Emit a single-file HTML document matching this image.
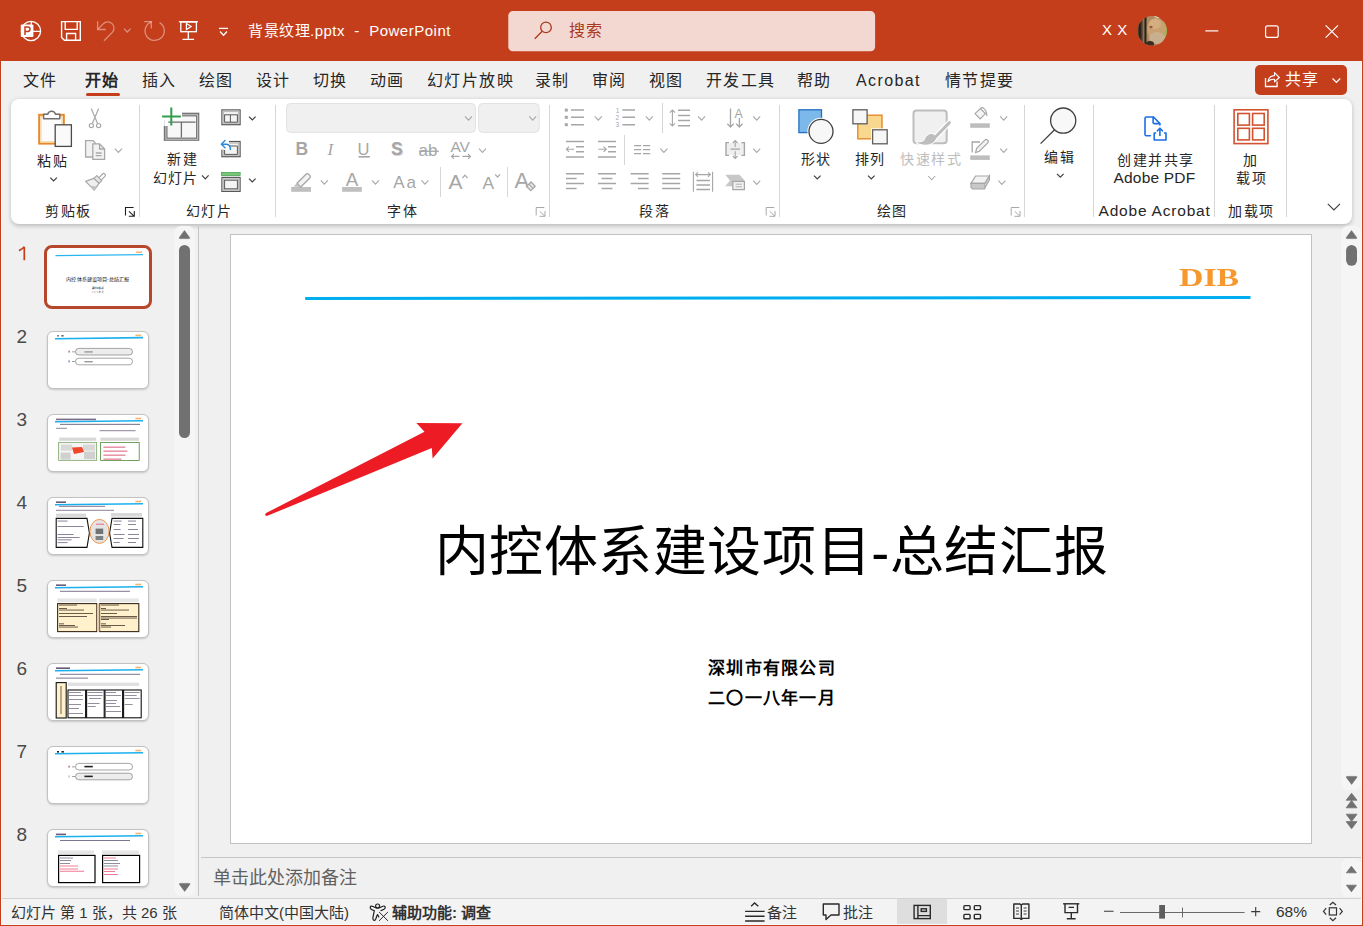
<!DOCTYPE html>
<html lang="zh-CN">
<head>
<meta charset="utf-8">
<style>
html,body{margin:0;padding:0;}
body{width:1363px;height:926px;overflow:hidden;position:relative;background:#F0F0F0;font-family:"Liberation Sans",sans-serif;color:#262626;}
.a{position:absolute;}
.t{position:absolute;white-space:nowrap;line-height:1;}
svg{position:absolute;overflow:visible;}
</style>
</head>
<body>
<!-- TITLE BAR -->
<div class="a" style="left:0;top:0;width:1363px;height:61px;background:#C43E1C;"></div>
<!-- window borders -->
<div class="a" style="left:0;top:61px;width:1px;height:865px;background:#C43E1C;"></div>
<div class="a" style="left:1362px;top:61px;width:1px;height:865px;background:#C43E1C;"></div>
<div class="a" style="left:0;top:925px;width:1363px;height:1px;background:#C43E1C;"></div>

<!-- TITLEBAR_ICONS -->
<svg style="left:0;top:0" width="1363" height="61" viewBox="0 0 1363 61">
 <!-- ppt logo -->
 <g fill="none" stroke="#fff" stroke-width="1.3">
  <circle cx="31" cy="31" r="9.6"/>
  <path d="M31.3 21.5V31.3H40.5"/>
 </g>
 <rect x="20.8" y="24.4" width="12.6" height="12.6" rx="1" fill="#fff"/>
 <path d="M25 35V27H27.8A2.2 2.2 0 0 1 27.8 31.4H25" fill="none" stroke="#C43E1C" stroke-width="1.5"/>
 <!-- save -->
 <g fill="none" stroke="#fff" stroke-width="1.4">
  <path d="M61.6 21.6H80.3V40.3H64.4L61.6 37.5Z"/>
  <path d="M65.2 21.6V29.4H77.2V21.6"/>
  <path d="M66.6 40.3V33.5H75.6V40.3"/>
 </g>
 <!-- undo -->
 <g fill="none" stroke="rgba(255,255,255,0.42)" stroke-width="1.3">
  <path d="M97.6 21.3V29.5H105.8"/>
  <path d="M98.2 28.9L103.3 23.8A6.2 6.2 0 0 1 112.3 32.4L104 40.8"/>
  <path d="M124 28.6L127.3 32L130.6 28.6"/>
  <path d="M159.6 22.6A9.6 9.6 0 1 1 151.5 21.8"/>
  <path d="M144.2 21.6H151.3V28.6"/>
 </g>
 <!-- present -->
 <g fill="none" stroke="#fff" stroke-width="1.3">
  <path d="M178.9 21.7H197.9"/>
  <rect x="180.8" y="22" width="15.6" height="9.7"/>
  <path d="M188.3 31.8V39.4M182.5 39.4H194.1"/>
 </g>
 <path d="M186.4 23.6L191.2 26.6L186.4 29.6Z" fill="none" stroke="#fff" stroke-width="1.2"/>
 <!-- customize -->
 <g fill="none" stroke="#fff" stroke-width="1.3">
  <path d="M219 28.4H228"/>
  <path d="M220 31.5L223.5 35.2L227 31.5"/>
 </g>
 <!-- search box -->
 <rect x="508.3" y="11.1" width="366.8" height="40.2" rx="4.5" fill="#F3D8D1"/>
 <g fill="none" stroke="#A8391E" stroke-width="1.3">
  <circle cx="546" cy="27.4" r="5.3"/>
  <path d="M542.2 31.2L534.8 38.8"/>
 </g>
 <!-- avatar -->
 <defs>
  <clipPath id="av"><circle cx="1152.2" cy="30.8" r="14.7"/></clipPath>
  <radialGradient id="avf" cx="0.55" cy="0.45" r="0.5"><stop offset="0" stop-color="#D8B080"/><stop offset="0.7" stop-color="#B88A58"/><stop offset="1" stop-color="#9A7048"/></radialGradient>
 </defs>
 <defs><filter id="avb" x="-20%" y="-20%" width="140%" height="140%"><feGaussianBlur stdDeviation="0.7"/></filter></defs>
 <g clip-path="url(#av)">
  <rect x="1137" y="15" width="31" height="32" fill="#B08A5E"/>
  <g filter="url(#avb)">
  <rect x="1163" y="15" width="6" height="32" fill="#A8B45A"/>
  <ellipse cx="1156" cy="29" rx="9" ry="11" fill="#C9A072"/>
  <ellipse cx="1155" cy="24" rx="6" ry="5" fill="#D4AE80"/>
  <ellipse cx="1157" cy="38" rx="8" ry="6" fill="#C8B08E"/>
  <rect x="1137" y="15" width="9.5" height="32" fill="#4A3C2C"/>
  <rect x="1139.2" y="15" width="1.4" height="32" fill="#221A12"/>
  <rect x="1142.6" y="15" width="1.6" height="32" fill="#8A7458"/>
  <rect x="1145" y="15" width="1.2" height="32" fill="#2A2016"/>
  <ellipse cx="1150" cy="44" rx="4" ry="3" fill="#3A2C20"/>
  <ellipse cx="1151" cy="27" rx="1.6" ry="1.2" fill="#9A5A48"/>
  <ellipse cx="1160" cy="16" rx="6" ry="2" fill="#E8E0D0"/>
  </g>
 </g>
 <!-- window controls -->
 <g fill="none" stroke="#fff" stroke-width="1.2">
  <path d="M1205.3 30.9H1218.3"/>
  <rect x="1265.6" y="25.8" width="12.6" height="11.6" rx="2"/>
  <path d="M1325.6 25.4L1338 37.6M1338 25.4L1325.6 37.6"/>
 </g>
</svg>
<div class="t" style="left:248px;top:22.5px;font-size:15px;letter-spacing:0.5px;color:#fff;">背景纹理.pptx&nbsp; -&nbsp; PowerPoint</div>
<div class="t" style="left:568.5px;top:22.5px;font-size:16px;letter-spacing:1.6px;color:#A8391E;">搜索</div>
<div class="t" style="left:1102px;top:22px;font-size:15px;letter-spacing:0.6px;color:#fff;">X X</div>

<!-- TABS -->
<div class="t" style="left:23px;top:73px;font-size:16px;letter-spacing:1.4px;">文件</div>
<div class="t" style="left:85px;top:73px;font-size:16px;letter-spacing:1.4px;font-weight:bold;">开始</div>
<div class="a" style="left:85.5px;top:93px;width:34.5px;height:3px;border-radius:1.5px;background:#C43E1C;"></div>
<div class="t" style="left:142px;top:73px;font-size:16px;letter-spacing:1.4px;">插入</div>
<div class="t" style="left:199px;top:73px;font-size:16px;letter-spacing:1.4px;">绘图</div>
<div class="t" style="left:256px;top:73px;font-size:16px;letter-spacing:1.4px;">设计</div>
<div class="t" style="left:313px;top:73px;font-size:16px;letter-spacing:1.4px;">切换</div>
<div class="t" style="left:370px;top:73px;font-size:16px;letter-spacing:1.4px;">动画</div>
<div class="t" style="left:427px;top:73px;font-size:16px;letter-spacing:1.4px;">幻灯片放映</div>
<div class="t" style="left:535px;top:73px;font-size:16px;letter-spacing:1.4px;">录制</div>
<div class="t" style="left:592px;top:73px;font-size:16px;letter-spacing:1.4px;">审阅</div>
<div class="t" style="left:649px;top:73px;font-size:16px;letter-spacing:1.4px;">视图</div>
<div class="t" style="left:706px;top:73px;font-size:16px;letter-spacing:1.4px;">开发工具</div>
<div class="t" style="left:797px;top:73px;font-size:16px;letter-spacing:1.4px;">帮助</div>
<div class="t" style="left:856px;top:73px;font-size:16px;letter-spacing:1.4px;">Acrobat</div>
<div class="t" style="left:945px;top:73px;font-size:16px;letter-spacing:1.4px;">情节提要</div>
<!-- share -->
<div class="a" style="left:1255px;top:65px;width:92px;height:30px;border-radius:5px;background:#C43E1C;"></div>
<svg style="left:0;top:0" width="1363" height="100">
 <g fill="none" stroke="#fff" stroke-width="1.3">
  <path d="M1265.5 78.1V86.5H1277.1V81.4"/>
  <path d="M1268 81.6Q1268.8 75.8 1274.5 75.6V72.6L1279.3 77.5L1274.5 81.8V79.2Q1270.4 79 1268 81.6Z" stroke-width="1.1" stroke-linejoin="round"/>
  <path d="M1332.6 78.5L1336.4 82.4L1340.2 78.5"/>
 </g>
</svg>
<div class="t" style="left:1285px;top:72px;font-size:16px;letter-spacing:1.4px;color:#fff;">共享</div>

<!-- RIBBON -->
<div class="a" style="left:11px;top:99px;width:1341px;height:125px;border-radius:8px;background:#fff;box-shadow:0 1.5px 4px rgba(0,0,0,0.22);"></div>
<svg style="left:0;top:0" width="1363" height="240">
 <!-- separators -->
 <g stroke="#D6D6D6" stroke-width="1">
  <path d="M139.5 105V217M275.5 105V217M549.5 105V217M779.5 105V217M1024.5 105V217M1093.5 105V217M1214.5 105V217M1286.5 105V217"/>
  <path d="M662.5 103V133M624.5 135V165M440.5 167V197M507.5 167V197"/>
 </g>
 <!-- paste -->
 <rect x="39.2" y="114.8" width="24.6" height="28.8" fill="#FCFCFC" stroke="#E8882A" stroke-width="2"/>
 <rect x="41" y="116.6" width="21" height="25.2" fill="none" stroke="#F8D89A" stroke-width="1.2"/>
 <path d="M43.6 118.8V114.2H47.8A3.9 3.9 0 0 1 55.4 114.2H59.8V118.8Z" fill="#fff" stroke="#707070" stroke-width="1.5" stroke-linejoin="round"/>
 <rect x="55.2" y="124.8" width="16.2" height="21.6" fill="#FAFAFA" stroke="#4A4A4A" stroke-width="1.3"/>
 <!-- cut -->
 <g fill="none" stroke="#A8A8A8" stroke-width="1.2">
  <path d="M91.2 108.4L97.6 123.6M98.7 108.4L92.3 123.6"/>
  <circle cx="91.4" cy="125.6" r="2.1"/><circle cx="98.6" cy="125.6" r="2.1"/>
 </g>
 <!-- copy -->
 <g stroke="#A8A8A8" stroke-width="1.3" fill="#F2F2F2">
  <path d="M85.6 157V140.6H93L95 142.6V157Z"/>
  <path d="M92.8 159.3V143.9H99.6L104.6 149V159.3Z"/>
  <path d="M99.6 143.9V149H104.6" fill="none"/>
  <path d="M95.8 153H101.6M95.8 155.6H101.6" fill="none"/>
 </g>
 <!-- format painter -->
 <path d="M98.2 178.4L102.6 174A1.5 1.5 0 0 1 104.7 174L104.9 174.2A1.5 1.5 0 0 1 104.9 176.3L100.5 180.7Z" fill="#fff" stroke="#A8A8A8" stroke-width="1.2"/>
 <path d="M93.8 178.4L96.8 175.6L101.8 180.6L99 183.4Z" fill="#E4E4E4" stroke="#A8A8A8" stroke-width="1.2" stroke-linejoin="round"/>
 <path d="M85.6 181.4L93.8 178.4L99 183.4L94.2 190.2Z" fill="#F0F0F0" stroke="#A8A8A8" stroke-width="1.2" stroke-linejoin="round"/>
 <path d="M89.4 185.4L96.6 186.4L94.2 190.2Z" fill="#C4C4C4"/>
 <!-- chevrons (dark) -->
 <g fill="none" stroke="#404040" stroke-width="1.2">
  <path d="M50.3 177.6L53.6 181L56.9 177.6"/>
  <path d="M202 175.4L205.3 178.8L208.6 175.4"/>
  <path d="M249 116.6L252.3 120L255.6 116.6"/>
  <path d="M249 178.6L252.3 182L255.6 178.6"/>
  <path d="M814 175.6L817.3 179L820.6 175.6"/>
  <path d="M868 175.6L871.3 179L874.6 175.6"/>
  <path d="M1057 173.8L1060.3 177.2L1063.6 173.8"/>
  <path d="M1327.8 203.8L1333.9 209.9L1340 203.8"/>
 </g>
 <!-- chevrons (disabled) -->
 <g fill="none" stroke="#A8A8A8" stroke-width="1.1">
  <path d="M114.8 148.6L118.4 152.4L122 148.6"/>
  <path d="M479 148.6L482.5 152.4L486 148.6"/>
  <path d="M320.8 180.4L324.3 184.2L327.8 180.4"/>
  <path d="M372 180.4L375.5 184.2L379 180.4"/>
  <path d="M421.4 180.4L424.9 184.2L428.4 180.4"/>
  <path d="M594.8 116.4L598.3 120.2L601.8 116.4"/>
  <path d="M645.8 116.4L649.3 120.2L652.8 116.4"/>
  <path d="M698 116.4L701.5 120.2L705 116.4"/>
  <path d="M753.2 116.4L756.7 120.2L760.2 116.4"/>
  <path d="M660.4 148.6L663.9 152.4L667.4 148.6"/>
  <path d="M753.2 148.6L756.7 152.4L760.2 148.6"/>
  <path d="M753.2 180.6L756.7 184.4L760.2 180.6"/>
  <path d="M928.2 176L931.7 179.8L935.2 176"/>
  <path d="M1000.2 116.4L1003.7 120.2L1007.2 116.4"/>
  <path d="M1000.2 148.6L1003.7 152.4L1007.2 148.6"/>
  <path d="M998.4 180.6L1001.9 184.4L1005.4 180.6"/>
 </g>
 <!-- dialog launchers -->
 <g fill="none" stroke="#1E1E1E" stroke-width="1.1"><path d="M125.5 215.5V207.5H133.6M129.0 211.3L134.3 216.3M134.3 211V216.3H128.8"/></g>
 <g fill="none" stroke="#A8A8A8" stroke-width="1"><path d="M536.2 215.5V207.5H544.3M539.7 211.3L545.0 216.3M545.0 211V216.3H539.5"/><path d="M766.2 215.5V207.5H774.3M769.7 211.3L775.0 216.3M775.0 211V216.3H769.5"/><path d="M1011.2 215.5V207.5H1019.3M1014.7 211.3L1020.0 216.3M1020.0 211V216.3H1014.5"/></g>
 <!-- new slide -->
 <rect x="165.9" y="114.8" width="31.8" height="24.4" fill="#F7F7F7" stroke="#6E6E6E" stroke-width="3.2"/>
 <rect x="165.9" y="114.8" width="31.8" height="24.4" fill="none" stroke="#CFCFCF" stroke-width="1"/>
 <path d="M168 122.2H195.5M181.4 122.2V137.5" stroke="#6E6E6E" stroke-width="1.3"/>
 <rect x="160" y="105" width="22" height="15" fill="#fff"/>
 <rect x="164.3" y="120" width="4" height="6" fill="#fff"/>
 <path d="M171.3 107.4V125.6M162.1 116.5H180.9" stroke="#2F9E4E" stroke-width="2"/>
 <path d="M182 113.2H199.3" stroke="#6E6E6E" stroke-width="1"/>
 <path d="M164.3 126V140.8" stroke="#6E6E6E" stroke-width="1"/>
 <!-- layout -->
 <rect x="221.9" y="109.9" width="18.2" height="14.8" fill="#F4F4F4" stroke="#585858" stroke-width="1.2"/>
 <rect x="223.4" y="111.4" width="15.2" height="11.8" fill="none" stroke="#BDBDBD" stroke-width="1.4"/>
 <path d="M224.3 114.8H237.7M224.6 122.2H237.4M224.6 114.8V122.2M237.4 114.8V122.2M230.4 114.8V122.2" fill="none" stroke="#585858" stroke-width="1"/>
 <!-- reset -->
 <rect x="221.9" y="141.5" width="18.2" height="15.2" fill="#F4F4F4" stroke="#585858" stroke-width="1.2"/>
 <rect x="223.4" y="143" width="15.2" height="12.2" fill="none" stroke="#BDBDBD" stroke-width="1.4"/>
 <path d="M228 146H237.4V154.4H224.6V150" fill="none" stroke="#585858" stroke-width="1"/>
 <rect x="219.6" y="139" width="9.4" height="10.6" fill="#fff"/>
 <g fill="none" stroke="#2B8AD8" stroke-width="1.4" stroke-linecap="round" stroke-linejoin="round">
  <path d="M221.6 144.2H226.6Q230.4 144.6 230.4 149.6"/>
  <path d="M225 140.6L221.4 144.2L225 147.8"/>
 </g>
 <!-- section -->
 <rect x="221.6" y="172.4" width="18.6" height="3.2" fill="#7CC576" stroke="#3C9E4E" stroke-width="0.7"/>
 <rect x="221.9" y="177.4" width="18.2" height="14" fill="#F4F4F4" stroke="#585858" stroke-width="1.2"/>
 <rect x="223.4" y="178.9" width="15.2" height="11" fill="none" stroke="#BDBDBD" stroke-width="1.4"/>
 <rect x="224.6" y="180.2" width="12.8" height="8.6" fill="#F4F4F4" stroke="#585858" stroke-width="1"/>
 <!-- font boxes -->
 <rect x="286.5" y="103.5" width="189" height="28.8" rx="4" fill="#F0F0F0" stroke="#E2E2E2" stroke-width="1"/>
 <rect x="478.6" y="103.5" width="60.6" height="28.8" rx="4" fill="#F0F0F0" stroke="#E2E2E2" stroke-width="1"/>
</svg>
<svg style="left:0;top:0" width="1363" height="240" font-family="Liberation Sans">
 <g fill="none" stroke="#A8A8A8" stroke-width="1.1"><path d="M465 116.4L468.5 120.2L472 116.4"/><path d="M529.2 116.4L532.7 120.2L536.2 116.4"/></g>
 <!-- font row1 -->
 <g fill="#A6A6A6">
  <text x="295.6" y="155.1" font-size="17.5" font-weight="bold">B</text>
  <text x="327.4" y="155" font-size="17" font-style="italic" font-family="Liberation Serif">I</text>
  <text x="357.4" y="154.6" font-size="16.5">U</text>
  <rect x="358.5" y="156" width="11.4" height="1.6"/>
  <text x="392.1" y="156.3" font-size="17.5" font-weight="bold" fill="#D8D8D8">S</text>
  <text x="390.9" y="155.2" font-size="17.5" font-weight="bold">S</text>
  <text x="418.6" y="156.2" font-size="17">ab</text>
  <rect x="419" y="150.6" width="19.8" height="1.3"/>
  <text x="450.4" y="151.6" font-size="15.5">AV</text>
 </g>
 <g fill="none" stroke="#A6A6A6" stroke-width="1.1">
  <path d="M451.5 156.4H459.5M454 154L451.5 156.4L454 158.8M462.5 156.4H470.5M468 154L470.5 156.4L468 158.8"/>
 </g>
 <!-- font row2 -->
 <rect x="291.2" y="187" width="19.8" height="4.8" fill="#BFBFBF"/>
 <path d="M297 183.2L306 174.2A1.8 1.8 0 0 1 308.6 174.2L309.8 175.4A1.8 1.8 0 0 1 309.8 178L300.8 187Z" fill="#F2F2F2" stroke="#A6A6A6" stroke-width="1.3"/>
 <path d="M297 183.2L300.8 187L293.4 186.6Z" fill="#BFBFBF"/>
 <rect x="342.1" y="187" width="19.7" height="4.8" fill="#BFBFBF"/>
 <g fill="#A6A6A6">
  <text x="345.8" y="185.7" font-size="18.8">A</text>
  <text x="393.2" y="188.4" font-size="17">A</text>
  <text x="406.4" y="188.4" font-size="17">a</text>
  <text x="448.6" y="188.5" font-size="21">A</text>
  <text x="482.4" y="188.5" font-size="17.4">A</text>
  <text x="514.6" y="188" font-size="22">A</text>
 </g>
 <g fill="none" stroke="#A6A6A6" stroke-width="1.2">
  <path d="M462.4 178.2L465 175.2L467.6 178.2"/>
  <path d="M495.2 174.4L497.6 177.2L500 174.4"/>
 </g>
 <path d="M526.6 186.4L531 182L535.2 186.2L530.8 190.6Z" fill="#E8E8E8" stroke="#A6A6A6" stroke-width="1.3"/>
 <path d="M528.8 184.2L533 188.4" stroke="#A6A6A6" stroke-width="1.2"/>
 <!-- paragraph -->
 <g fill="#A6A6A6">
  <rect x="564.8" y="108.6" width="3" height="3"/><rect x="564.8" y="115.8" width="3" height="3"/><rect x="564.8" y="123.2" width="3" height="3"/>
  <text x="615.8" y="112.5" font-size="6.5">1</text><text x="615.6" y="119.8" font-size="6.5">2</text><text x="615.6" y="127.2" font-size="6.5">3</text>
  <text x="734.6" y="117.6" font-size="12.5">A</text>
 </g>
 <g fill="none" stroke="#A6A6A6" stroke-width="1.5">
  <path d="M571 110H584M571 117.3H584M571 124.7H584"/>
  <path d="M622.4 110H635M622.4 117.3H635M622.4 124.7H635"/>
  <path d="M678 110.2H690M678 115.4H690M678 120.6H690M678 125.8H690"/>
  <path d="M566 141.5H584M576 146.8H584M576 151.8H584M566 157H584"/>
  <path d="M598 141.5H616M608 146.8H616M608 151.8H616M598 157H616"/>
  <path d="M566 173.8H584M566 178.6H576.6M566 183.4H584M566 188.4H576.6"/>
  <path d="M598 173.8H616M601.6 178.6H612.4M598 183.4H616M601.6 188.4H612.4"/>
  <path d="M630.6 173.8H648.6M638 178.6H648.6M630.6 183.4H648.6M638 188.4H648.6"/>
  <path d="M662.2 173.8H680.2M662.2 178.6H680.2M662.2 183.4H680.2M662.2 188.4H680.2"/>
  <path d="M696.4 180.4H710M696.4 185H710M696.4 189.6H710"/>
 </g>
 <g fill="none" stroke="#A6A6A6" stroke-width="1.1">
  <path d="M634 145.6H641.2M634 149.6H641.2M634 153.6H641.2M643 145.6H650.2M643 149.6H650.2M643 153.6H650.2"/>
  <path d="M672.4 110V126M669.8 112.6L672.4 110L675 112.6M669.8 123.4L672.4 126L675 123.4"/>
  <path d="M566.4 149.2H574.2M569 146.6L566.4 149.2L569 151.8"/>
  <path d="M598.4 149.2H606.2M603.6 146.6L606.2 149.2L603.6 151.8"/>
  <path d="M693.4 171.8V191.8M712.6 171.8V191.8M695.6 174.6H710.4M698 172.4L695.6 174.6L698 176.8M708 172.4L710.4 174.6L708 176.8"/>
 </g>
 <g fill="none" stroke="#A6A6A6" stroke-width="1.3">
  <path d="M730.5 108.4V127M727.3 123.8L730.5 127L733.7 123.8"/>
  <path d="M739.4 118V127M736.2 123.8L739.4 127L742.6 123.8"/>
 </g>
 <rect x="726" y="143" width="18" height="12" fill="#EFEFEF"/>
 <g fill="none" stroke="#A6A6A6" stroke-width="1.4">
  <path d="M729 142.6H726V155.4H729M741.4 142.6H744.4V155.4H741.4"/>
 </g>
 <g fill="none" stroke="#A6A6A6" stroke-width="1.1">
  <path d="M730.6 149.1H740M735.2 140.6V147M732.8 143L735.2 140.6L737.6 143M735.2 151.2V158.4M732.8 156L735.2 158.4L737.6 156"/>
 </g>
 <path d="M725.2 174.8H739.6L744.2 180V182H732.6V186.2H725.2L730 180.6Z" fill="#C8C8C8"/>
 <rect x="732.8" y="181.4" width="11.6" height="8.2" fill="#F2F2F2" stroke="#A6A6A6" stroke-width="1.3"/>
 <path d="M735.6 184.2H742M735.6 186.8H742" stroke="#A6A6A6" stroke-width="0.9"/>
 <!-- drawing -->
 <rect x="798.9" y="109.8" width="22.6" height="22.8" fill="#7DB8EA" stroke="#2270C4" stroke-width="1.3"/>
 <circle cx="821" cy="131.4" r="13.6" fill="#fff"/>
 <circle cx="821" cy="131.4" r="12" fill="#F7F7F7" stroke="#404040" stroke-width="1.3"/>
 <rect x="857.8" y="115.2" width="24.2" height="23.6" fill="#F8D88E" stroke="#E8882A" stroke-width="1.4"/>
 <rect x="852.9" y="109.8" width="14.2" height="14" fill="#F6F6F6" stroke="#5E5E5E" stroke-width="1.3"/>
 <rect x="871" y="128.4" width="18" height="17.2" fill="#fff"/>
 <rect x="872.6" y="129.8" width="14.6" height="14" fill="#F6F6F6" stroke="#5E5E5E" stroke-width="1.3"/>
 <rect x="913.5" y="110.5" width="33.2" height="32.8" rx="3" fill="#F0F0F0" stroke="#BDBDBD" stroke-width="2"/>
 <path d="M949.6 122.4L934 138.6" stroke="#fff" stroke-width="5.4" stroke-linecap="round"/>
 <path d="M916 142.6Q924 146.6 932 143.2Q936.6 140.6 935.6 136.6Q933.4 132.8 929.4 134.2Q925.6 135.8 924.8 139.6Q924 142.4 916 142.6Z" fill="#BDBDBD" stroke="#fff" stroke-width="1.6"/>
 <path d="M916 142.6Q924 146.6 932 143.2Q936.6 140.6 935.6 136.6Q933.4 132.8 929.4 134.2Q925.6 135.8 924.8 139.6Q924 142.4 916 142.6Z" fill="#BDBDBD"/>
 <path d="M949.4 122.6L934.2 138.2" stroke="#BDBDBD" stroke-width="3" stroke-linecap="round"/>
 <!-- fill -->
 <rect x="970.2" y="123.3" width="19.6" height="4.5" fill="#BDBDBD"/>
 <path d="M975 113.6L980.4 108.6L985.4 113.6L980.2 119Z" fill="#F4F4F4" stroke="#A6A6A6" stroke-width="1.2"/>
 <path d="M980.4 108.6Q982 106.8 984 108.6Q986.8 111 986.8 116" fill="none" stroke="#A6A6A6" stroke-width="1.2"/>
 <!-- outline -->
 <rect x="970.2" y="155.4" width="19.6" height="4.5" fill="#BDBDBD"/>
 <path d="M980 142H972.2V152.4" fill="none" stroke="#A6A6A6" stroke-width="1.3"/>
 <path d="M975.6 152.6L976.6 148.4L985.2 139.8A1.4 1.4 0 0 1 987.2 139.8L988 140.6A1.4 1.4 0 0 1 988 142.6L979.4 151.2Z" fill="#F2F2F2" stroke="#A6A6A6" stroke-width="1.2"/>
 <!-- effects -->
 <path d="M971 183.4L975.6 176H989.4L985 183.4Z" fill="#F2F2F2" stroke="#A6A6A6" stroke-width="1.2"/>
 <path d="M971 183.4V187.2L972.6 189H984.6L985 187V183.4Z" fill="#C8C8C8" stroke="#A6A6A6" stroke-width="1.2"/>
 <path d="M985 183.4L989.4 176V180L985 187.4" fill="#DADADA" stroke="#A6A6A6" stroke-width="1.2"/>
 <!-- editing -->
 <circle cx="1063.2" cy="120.6" r="12.6" fill="#F8F8F8" stroke="#404040" stroke-width="1.3"/>
 <path d="M1054.6 129.8L1040.6 143.6" stroke="#404040" stroke-width="1.3"/>
 <!-- acrobat -->
 <g fill="none" stroke="#1A6FE6" stroke-width="1.6" stroke-linecap="round" stroke-linejoin="round">
  <path d="M1150.4 135.7H1146.4Q1145 135.7 1145 134.3V118.4Q1145 117 1146.4 117H1153.5L1159.9 123.6V125"/>
  <path d="M1153.1 117.4V122.6Q1153.1 123.6 1154.1 123.6H1159.6"/>
  <path d="M1155.6 133H1154.2V140H1166V133H1164.5"/>
  <path d="M1159.9 135.5V128.6M1157.4 130.8L1159.9 128.2L1162.4 130.8"/>
 </g>
 <!-- add-ins -->
 <g fill="none" stroke="#D35230" stroke-width="1.6">
  <rect x="1234.1" y="109.8" width="33.8" height="33.8"/>
  <rect x="1237.8" y="113.5" width="11.6" height="11.6"/><rect x="1252.6" y="113.5" width="11.6" height="11.6"/>
  <rect x="1237.8" y="128.3" width="11.6" height="11.6"/><rect x="1252.6" y="128.3" width="11.6" height="11.6"/>
 </g>
</svg>
<div class="t" style="left:387px;top:204px;font-size:14px;letter-spacing:1.6px;">字体</div>
<div class="t" style="left:639px;top:204px;font-size:14px;letter-spacing:1.6px;">段落</div>
<div class="t" style="left:876.5px;top:204px;font-size:14px;letter-spacing:1.6px;">绘图</div>
<div class="t" style="left:800.5px;top:152px;font-size:14px;letter-spacing:1.6px;">形状</div>
<div class="t" style="left:854.5px;top:152px;font-size:14px;letter-spacing:1.6px;">排列</div>
<div class="t" style="left:900px;top:152px;font-size:14px;letter-spacing:1.6px;color:#BDBDBD;">快速样式</div>
<div class="t" style="left:1044px;top:150px;font-size:14px;letter-spacing:1.6px;">编辑</div>
<div class="t" style="left:1117px;top:152.5px;font-size:14px;letter-spacing:1.6px;">创建并共享</div>
<div class="t" style="left:1113.5px;top:170px;font-size:15.5px;letter-spacing:0.2px;">Adobe PDF</div>
<div class="t" style="left:1098.5px;top:203px;font-size:15.5px;letter-spacing:0.8px;">Adobe Acrobat</div>
<div class="t" style="left:1243px;top:152.5px;font-size:14px;">加</div>
<div class="t" style="left:1236px;top:171px;font-size:14px;letter-spacing:1.6px;">载项</div>
<div class="t" style="left:1228px;top:203.5px;font-size:14px;letter-spacing:1.6px;">加载项</div>
<div class="t" style="left:37px;top:154px;font-size:14px;letter-spacing:1.6px;">粘贴</div>
<div class="t" style="left:45px;top:204px;font-size:14px;letter-spacing:1.6px;">剪贴板</div>
<div class="t" style="left:167px;top:152px;font-size:14px;letter-spacing:1.6px;">新建</div>
<div class="t" style="left:152.5px;top:171px;font-size:14px;letter-spacing:1.2px;">幻灯片</div>
<div class="t" style="left:185.5px;top:204px;font-size:14px;letter-spacing:1.6px;">幻灯片</div>

<!-- LEFT PANE -->
<div class="a" style="left:174px;top:226px;width:21px;height:670px;border-radius:7px;background:#F5F5F5;"></div>
<div class="a" style="left:198px;top:226px;width:1px;height:670px;background:#C4C4C4;"></div>
<div class="a" style="left:179px;top:244.9px;width:10.9px;height:193.4px;border-radius:5.5px;background:#717171;"></div>
<svg style="left:0;top:0" width="1363" height="926">
 <path d="M184.45 230.6L189.6 237.6Q190 238.6 189 238.6H179.9Q178.9 238.6 179.3 237.6Z" fill="#717171" stroke="#717171" stroke-width="0.6" stroke-linejoin="round"/>
 <path d="M184.65 891.4L189.8 884.4Q190.2 883.4 189.2 883.4H180.1Q179.1 883.4 179.5 884.4Z" fill="#717171" stroke="#717171" stroke-width="0.6" stroke-linejoin="round"/>
</svg>
<svg style="left:0;top:0" width="40" height="270"><path d="M24.3 246.8V260.2M19 250.6Q22.6 249 24.3 246.8" fill="none" stroke="#C43E1C" stroke-width="1.7"/></svg>
<div class="t" style="left:16.5px;top:327px;font-size:19px;color:#4A4A4A;">2</div>
<div class="t" style="left:16.5px;top:410px;font-size:19px;color:#4A4A4A;">3</div>
<div class="t" style="left:16.5px;top:493px;font-size:19px;color:#4A4A4A;">4</div>
<div class="t" style="left:16.5px;top:576px;font-size:19px;color:#4A4A4A;">5</div>
<div class="t" style="left:16.5px;top:659px;font-size:19px;color:#4A4A4A;">6</div>
<div class="t" style="left:16.5px;top:742px;font-size:19px;color:#4A4A4A;">7</div>
<div class="t" style="left:16.5px;top:825px;font-size:19px;color:#4A4A4A;">8</div>
<!-- thumbnails -->
<div class="a" style="left:44px;top:245px;width:102px;height:58px;border:3px solid #B7472A;border-radius:8px;background:#fff;"></div>
<div class="a" style="left:47.3px;top:331.2px;width:99.3px;height:55.4px;border:1px solid #C2C2C2;border-radius:6px;background:#fff;box-shadow:0 1px 2px rgba(0,0,0,0.18);"></div>
<div class="a" style="left:47.3px;top:414.3px;width:99.3px;height:55.4px;border:1px solid #C2C2C2;border-radius:6px;background:#fff;box-shadow:0 1px 2px rgba(0,0,0,0.18);"></div>
<div class="a" style="left:47.3px;top:497.4px;width:99.3px;height:55.4px;border:1px solid #C2C2C2;border-radius:6px;background:#fff;box-shadow:0 1px 2px rgba(0,0,0,0.18);"></div>
<div class="a" style="left:47.3px;top:580.4px;width:99.3px;height:55.4px;border:1px solid #C2C2C2;border-radius:6px;background:#fff;box-shadow:0 1px 2px rgba(0,0,0,0.18);"></div>
<div class="a" style="left:47.3px;top:663.4px;width:99.3px;height:55.4px;border:1px solid #C2C2C2;border-radius:6px;background:#fff;box-shadow:0 1px 2px rgba(0,0,0,0.18);"></div>
<div class="a" style="left:47.3px;top:746.4px;width:99.3px;height:55.4px;border:1px solid #C2C2C2;border-radius:6px;background:#fff;box-shadow:0 1px 2px rgba(0,0,0,0.18);"></div>
<div class="a" style="left:47.3px;top:829.4px;width:99.3px;height:55.4px;border:1px solid #C2C2C2;border-radius:6px;background:#fff;box-shadow:0 1px 2px rgba(0,0,0,0.18);"></div>
<svg style="left:0;top:0" width="1363" height="926">
 <!-- thumb1 -->
 <path d="M55.5 255.6L143 254.6" stroke="#29B6F0" stroke-width="1.2"/>
 <rect x="136" y="251.5" width="6" height="1.4" fill="#F8B26A"/>
 <text x="66.4" y="281.2" font-size="5.1" fill="#222" textLength="62.5" lengthAdjust="spacingAndGlyphs">内控体系建设项目-总结汇报</text>
 <text x="91.6" y="289.4" font-size="1.8" fill="#333" font-weight="bold" textLength="12.6" lengthAdjust="spacingAndGlyphs">深圳市有限公司</text>
 <text x="92.4" y="292.6" font-size="1.8" fill="#444" font-weight="bold" textLength="11" lengthAdjust="spacingAndGlyphs">二〇一八年一月</text>
 <!-- common headers for thumbs 2-8 -->
 <g id="hdrs">
 <path d="M55 338.7L143 337.6" stroke="#1AB0EE" stroke-width="1.6"/><rect x="135.4" y="334.6" width="5.8" height="1.6" fill="#F8B26A"/>
 <path d="M55 421.8L143 420.7" stroke="#1AB0EE" stroke-width="1.6"/><rect x="135.4" y="417.7" width="5.8" height="1.6" fill="#F8B26A"/>
 <path d="M55 504.8L143 503.7" stroke="#1AB0EE" stroke-width="1.6"/><rect x="135.4" y="500.7" width="5.8" height="1.6" fill="#F8B26A"/>
 <path d="M55 587.8L143 586.7" stroke="#1AB0EE" stroke-width="1.6"/><rect x="135.4" y="583.7" width="5.8" height="1.6" fill="#F8B26A"/>
 <path d="M55 670.8L143 669.7" stroke="#1AB0EE" stroke-width="1.6"/><rect x="135.4" y="666.7" width="5.8" height="1.6" fill="#F8B26A"/>
 <path d="M55 753.8L143 752.7" stroke="#1AB0EE" stroke-width="1.6"/><rect x="135.4" y="749.7" width="5.8" height="1.6" fill="#F8B26A"/>
 <path d="M55 836.8L143 835.7" stroke="#1AB0EE" stroke-width="1.6"/><rect x="135.4" y="832.7" width="5.8" height="1.6" fill="#F8B26A"/>
 </g>
 <!-- thumb2 -->
 <rect x="57" y="335" width="2" height="1.6" fill="#888"/><rect x="61.5" y="335" width="2" height="1.6" fill="#555"/>
 <rect x="75.5" y="348.4" width="57" height="6.6" rx="3.3" fill="#EDEDED" stroke="#6A6A6A" stroke-width="0.6"/>
 <rect x="75.5" y="358.2" width="57" height="6.6" rx="3.3" fill="#fff" stroke="#6A6A6A" stroke-width="0.6"/>
 <rect x="68.6" y="350.6" width="1" height="2" fill="#A33"/><rect x="72" y="351.6" width="3" height="0.6" fill="#666"/>
 <rect x="68.6" y="360.4" width="1" height="2" fill="#36A"/><rect x="72" y="361.4" width="3" height="0.6" fill="#666"/>
 <rect x="84.4" y="351.2" width="8.4" height="1.4" fill="#999"/><rect x="84.4" y="361" width="8.4" height="1.4" fill="#999"/>
 <!-- thumb3 -->
 <rect x="56" y="418.6" width="40" height="1.6" fill="#7A6A8A"/>
 <rect x="60" y="423.8" width="80" height="1.2" fill="#8A8298"/>
 <rect x="56" y="427.8" width="11" height="1" fill="#9088A0"/>
 <rect x="99.6" y="430.2" width="36" height="1" fill="#8A8298"/>
 <rect x="59.2" y="437.6" width="37" height="3.2" fill="#D8D8D8"/><rect x="100.4" y="437.6" width="38.6" height="3.2" fill="#D8D8D8"/>
 <rect x="58.6" y="442.4" width="38" height="18" fill="#F4F4F4" stroke="#8AAE78" stroke-width="0.9"/>
 <rect x="100.6" y="442.4" width="38.6" height="18" fill="#fff" stroke="#4E8A3A" stroke-width="0.8"/>
 <rect x="61" y="444.6" width="11" height="6" fill="#D8D8D8"/><rect x="83" y="444.6" width="12" height="6" fill="#D8D8D8"/>
 <rect x="60.6" y="452.6" width="10" height="7" fill="#D0D0D0"/><rect x="84" y="451.6" width="11" height="7.4" fill="#D0D0D0"/>
 <path d="M72 447.6L82 447L84 452L74 454Z" fill="#F0462A"/>
 <rect x="103.4" y="446.6" width="22" height="1.1" fill="#E06A88"/><rect x="103.4" y="450.6" width="24" height="1.1" fill="#E06A88"/>
 <rect x="103.4" y="454.6" width="22" height="1.1" fill="#E06A88"/><rect x="103.4" y="458.6" width="18" height="1.1" fill="#E06A88"/>
 <!-- thumb4 -->
 <rect x="56" y="501.4" width="10" height="1.6" fill="#6A5A7A"/>
 <rect x="59" y="505.8" width="46" height="1" fill="#7E7690"/>
 <rect x="56" y="509.8" width="58" height="1" fill="#8A8298"/>
 <rect x="56" y="513.6" width="30" height="3.2" fill="#D8D8D8"/><rect x="111" y="513" width="31" height="3.6" fill="#D8D8D8"/>
 <path d="M56.2 518.4H87L89.4 533L87 547.4H56.2Z" fill="#fff" stroke="#111" stroke-width="1.1"/>
 <path d="M142.8 518.4H112L109.6 533L112 547.4H142.8Z" fill="#fff" stroke="#111" stroke-width="1.1"/>
 <ellipse cx="99.5" cy="531.4" rx="9.6" ry="12" fill="#E4E4E4" stroke="#EE8B3A" stroke-width="0.9"/>
 <rect x="95.6" y="528.6" width="7.6" height="5.4" fill="#555" opacity="0.8"/><rect x="95.6" y="536" width="7.6" height="4" fill="#666" opacity="0.8"/>
 <rect x="96" y="523.6" width="8" height="1.4" fill="#F08AA0"/>
 <g fill="#7E7690"><rect x="57.6" y="520.6" width="10" height="0.9"/><rect x="57.6" y="526" width="26" height="0.9"/><rect x="57.6" y="534" width="16" height="0.9"/><rect x="57.6" y="537" width="22" height="0.9"/><rect x="57.6" y="539.4" width="14" height="0.9"/><rect x="57.6" y="542.2" width="10" height="0.9"/>
 <rect x="113.6" y="520.6" width="8" height="0.9"/><rect x="128" y="520.6" width="8" height="0.9"/><rect x="113.6" y="524" width="7" height="0.9"/><rect x="128" y="524" width="8" height="0.9"/><rect x="113.6" y="529" width="7" height="0.9"/><rect x="128" y="529" width="10" height="0.9"/><rect x="113.6" y="534" width="11" height="0.9"/><rect x="128" y="534" width="11" height="0.9"/><rect x="113.6" y="538" width="10" height="0.9"/><rect x="128" y="538" width="11" height="0.9"/><rect x="113.6" y="542" width="6" height="0.9"/><rect x="128" y="542" width="8" height="0.9"/></g>
 <!-- thumb5 -->
 <rect x="56" y="584.4" width="10" height="1.6" fill="#6A5A7A"/>
 <rect x="60" y="590.8" width="70" height="1" fill="#7E7690"/>
 <rect x="57.2" y="598.4" width="39.6" height="3.8" fill="#E6E6E6"/><rect x="99.2" y="598.4" width="39.6" height="3.8" fill="#E6E6E6"/>
 <rect x="57.6" y="603.6" width="39.2" height="28" fill="#FFF1CC" stroke="#3A2A1A" stroke-width="1.1"/>
 <rect x="99.6" y="603.6" width="39.2" height="28" fill="#FFF1CC" stroke="#3A2A1A" stroke-width="1.1"/>
 <rect x="97" y="603.6" width="2.4" height="28" fill="#E8C8A8"/>
 <g fill="#5A4A3A"><rect x="59" y="604.6" width="18" height="0.9"/><rect x="59" y="608" width="8" height="0.9"/><rect x="59" y="609.6" width="25" height="0.9"/><rect x="59" y="613" width="34" height="0.9"/><rect x="59" y="616" width="28" height="0.9"/><rect x="59" y="623.4" width="5" height="0.9"/><rect x="59" y="625" width="16" height="0.9"/><rect x="59" y="626.6" width="19" height="0.9"/>
 <rect x="101" y="604.6" width="18" height="0.9"/><rect x="101" y="608" width="5" height="0.9"/><rect x="101" y="609.6" width="28" height="0.9"/><rect x="101" y="613" width="16" height="0.9"/><rect x="101" y="616" width="36" height="0.9"/><rect x="101" y="617.6" width="36" height="0.9"/><rect x="101" y="619" width="8" height="0.9"/><rect x="101" y="623.4" width="5" height="0.9"/><rect x="101" y="625" width="24" height="0.9"/><rect x="101" y="626.6" width="10" height="0.9"/></g>
 <!-- thumb6 -->
 <rect x="56" y="667.4" width="14" height="1.6" fill="#6A5A7A"/>
 <rect x="60" y="673.8" width="80" height="1" fill="#7E7690"/><rect x="56" y="677.6" width="32" height="1" fill="#7E7690"/>
 <rect x="68" y="682.6" width="71" height="3.4" fill="#E0E0E0"/>
 <rect x="56.2" y="682.6" width="10" height="35.4" fill="#FFF1CC" stroke="#111" stroke-width="1.1"/>
 <rect x="68" y="690" width="17.6" height="27.8" fill="#fff" stroke="#111" stroke-width="1.1"/>
 <rect x="86.6" y="690" width="17.6" height="27.8" fill="#fff" stroke="#111" stroke-width="1.1"/>
 <rect x="105" y="690" width="17.6" height="27.8" fill="#fff" stroke="#111" stroke-width="1.1"/>
 <rect x="123.6" y="690" width="17.6" height="27.8" fill="#fff" stroke="#111" stroke-width="1.1"/>
 <g fill="#7A7288"><rect x="69" y="692" width="12" height="0.8"/><rect x="69" y="695" width="14" height="0.8"/><rect x="69" y="699" width="14" height="0.8"/><rect x="69" y="704" width="12" height="0.8"/><rect x="69" y="708" width="10" height="0.8"/><rect x="69" y="713" width="14" height="0.8"/>
 <rect x="87.6" y="692" width="15" height="0.8"/><rect x="87.6" y="695" width="15" height="0.8"/><rect x="89" y="698" width="12" height="0.8"/><rect x="87.6" y="703" width="12" height="0.8"/><rect x="87.6" y="706" width="8" height="0.8"/>
 <rect x="106" y="692" width="10" height="0.8"/><rect x="106" y="695" width="15" height="0.8"/><rect x="106" y="700" width="11" height="0.8"/><rect x="106" y="703" width="10" height="0.8"/><rect x="106" y="706" width="14" height="0.8"/><rect x="106" y="711" width="15" height="0.8"/>
 <rect x="124.6" y="692" width="15" height="0.8"/><rect x="124.6" y="695" width="12" height="0.8"/><rect x="124.6" y="698" width="15" height="0.8"/><rect x="124.6" y="704" width="8" height="0.8"/>
 <rect x="60" y="686" width="2" height="28" fill="#B8A888"/></g>
 <!-- thumb7 -->
 <rect x="57" y="751" width="2" height="1.6" fill="#222"/><rect x="61.5" y="751" width="2.4" height="1.6" fill="#222"/>
 <rect x="75.5" y="763.4" width="57" height="6.6" rx="3.3" fill="#fff" stroke="#6A6A6A" stroke-width="0.6"/>
 <rect x="75.5" y="773.2" width="57" height="6.6" rx="3.3" fill="#EDEDED" stroke="#6A6A6A" stroke-width="0.6"/>
 <rect x="68.6" y="765.6" width="1" height="2" fill="#A33"/><rect x="72" y="766.6" width="3" height="0.6" fill="#666"/>
 <rect x="68.6" y="775.4" width="1" height="2" fill="#8AA"/><rect x="72" y="776.4" width="3" height="0.6" fill="#666"/>
 <rect x="84.4" y="765.8" width="8.4" height="1.6" fill="#222"/><rect x="84.4" y="775.6" width="8.4" height="1.6" fill="#222"/>
 <!-- thumb8 -->
 <rect x="56" y="833.6" width="10" height="1.6" fill="#6A5A7A"/>
 <rect x="60" y="840" width="70" height="1" fill="#7E7690"/>
 <rect x="58" y="850.4" width="36" height="3.6" fill="#E6E6E6"/><rect x="102" y="850.4" width="37" height="3.6" fill="#E6E6E6"/>
 <rect x="58.6" y="855.4" width="36.4" height="27.2" fill="#fff" stroke="#000" stroke-width="1.2"/>
 <rect x="102.6" y="855.4" width="37" height="27.2" fill="#fff" stroke="#000" stroke-width="1.2"/>
 <g fill="#7A7288"><rect x="60" y="857.6" width="13" height="0.8"/><rect x="60" y="860" width="11" height="0.8"/><rect x="60" y="863" width="10" height="0.8"/><rect x="104" y="860" width="14" height="0.8"/><rect x="104" y="863" width="16" height="0.8"/><rect x="104" y="865.6" width="14" height="0.8"/></g>
 <g fill="#EA5A78"><rect x="60" y="865.6" width="18" height="0.8"/><rect x="60" y="868.6" width="18" height="0.8"/><rect x="60" y="870.8" width="24" height="0.8"/><rect x="104" y="857.6" width="12" height="0.8"/><rect x="104" y="868.6" width="14" height="0.8"/><rect x="104" y="871" width="11" height="0.8"/><rect x="104" y="874" width="14" height="0.8"/></g>
</svg>

<!-- SLIDE -->
<div class="a" style="left:230px;top:234px;width:1080px;height:608px;border:1px solid #C2C2C2;background:#fff;"></div>
<svg style="left:0;top:0" width="1363" height="926">
 <path d="M305.2 298.45L1250.5 297.5" stroke="#00AEEF" stroke-width="3"/>
 <path d="M265.5 515.2Q264.6 513.6 266.6 512.8L424.5 431.8L416.4 422.9L462.4 423.2L432.6 458.4L431.8 447.9L267.4 515.8Q266 516.2 265.5 515.2Z" fill="#ED1C24"/>
 <!-- main scrollbar -->
 <rect x="1341" y="226" width="20.5" height="564" rx="7" fill="#F5F5F5"/>
 <path d="M1351.5 230.6L1356.7 237.6Q1357.1 238.6 1356.1 238.6H1346.9Q1345.9 238.6 1346.3 237.6Z" fill="#717171" stroke="#717171" stroke-width="0.6" stroke-linejoin="round"/>
 <rect x="1346.1" y="244.9" width="10.9" height="20.9" rx="5.45" fill="#717171"/>
 <path d="M1351.6 784.4L1356.8 777.4Q1357.2 776.4 1356.2 776.4H1347Q1346 776.4 1346.4 777.4Z" fill="#717171" stroke="#717171" stroke-width="0.6" stroke-linejoin="round"/>
 <path d="M1351.6 793.2L1357 800.2H1346.2Z M1351.6 800.4L1357 807.8H1346.2Z" fill="#717171" stroke="#717171" stroke-width="0.8" stroke-linejoin="round"/>
 <path d="M1351.6 821.4L1357 814.2H1346.2Z M1351.6 828.8L1357 821.6H1346.2Z" fill="#717171" stroke="#717171" stroke-width="0.8" stroke-linejoin="round"/>
</svg>
<div class="t" style="left:1179px;top:265px;font-family:'Liberation Serif',serif;font-weight:bold;font-size:26px;color:#F7982F;transform:scaleX(1.3);transform-origin:0 0;">DIB</div>
<div class="t" style="left:434.5px;top:525px;font-size:54px;letter-spacing:0.6px;color:#000;">内控体系建设项目-总结汇报</div>
<div class="t" style="left:708px;top:660px;font-size:17px;letter-spacing:1.3px;font-weight:bold;color:#000;">深圳市有限公司</div>
<div class="t" style="left:708px;top:690px;font-size:17px;letter-spacing:1.3px;font-weight:bold;color:#000;">二〇一八年一月</div>

<!-- NOTES & STATUS -->
<div class="a" style="left:201px;top:857px;width:1161px;height:1px;background:#C6C6C6;"></div>
<div class="t" style="left:213px;top:869px;font-size:18px;color:#616161;">单击此处添加备注</div>
<div class="a" style="left:1341px;top:859px;width:20.5px;height:38px;border-radius:7px;background:#F5F5F5;"></div>
<div class="a" style="left:1px;top:898px;width:1361px;height:1px;background:#D2D2D2;"></div>
<div class="a" style="left:1px;top:899px;width:1361px;height:26px;background:#F3F3F3;"></div>
<div class="a" style="left:897.3px;top:899px;width:49.6px;height:26px;background:#DEDEDE;"></div>
<svg style="left:0;top:0" width="1363" height="926">
 <path d="M1351.4 866.2L1356.4 872.8H1346.4Z" fill="#717171" stroke="#717171" stroke-width="0.8" stroke-linejoin="round"/>
 <path d="M1351.4 891.8L1356.4 885.2H1346.4Z" fill="#717171" stroke="#717171" stroke-width="0.8" stroke-linejoin="round"/>
 <g fill="none" stroke="#2A2A2A" stroke-width="1.4">
  <path d="M751.1 906.3L754.6 903L758.3 906.3"/>
  <path d="M745.1 911.4H764.6M745.1 916.3H764.6M745.1 921H764.6"/>
  <path d="M823.3 904H839V915H831L826 919.6V915H823.3Z" stroke-linejoin="round"/>
  <rect x="914.1" y="905.4" width="16.2" height="13.2"/>
  <path d="M917.9 905.4V918.6M917.9 915.6H930.3"/>
  <rect x="921.2" y="908.8" width="5.2" height="2.6"/>
  <rect x="963.9" y="905.6" width="6.2" height="4" rx="0.8"/><rect x="974.3" y="905.6" width="6.2" height="4" rx="0.8"/>
  <rect x="963.9" y="914.4" width="6.2" height="4.4" rx="0.8"/><rect x="974.3" y="914.4" width="6.2" height="4.4" rx="0.8"/>
  <path d="M1013.8 904V918.4H1020L1021.3 919.4L1022.6 918.4H1028.9V904H1022.6L1021.3 905L1020 904Z" stroke-linejoin="round"/>
  <path d="M1021.3 905V918.6"/>
  <path d="M1016 908H1019M1016 911H1019M1016 914H1019M1023.6 908H1026.6M1023.6 911H1026.6M1023.6 914H1026.6" stroke-width="0.9"/>
  <path d="M1063.1 903.8H1079.3"/>
  <path d="M1065 903.8V912.6H1077.5V903.8"/>
  <path d="M1071.3 912.6V918.6M1066.8 918.8H1075.6M1068.6 907.4H1074"/>

 </g>
 <path d="M1120 912.5H1244.6" stroke="#6A6A6A" stroke-width="1"/>
 <path d="M1182.5 907.6V917.4" stroke="#6A6A6A" stroke-width="1"/>
 <path d="M1104 911.3H1113.6M1251.2 911.6H1260.2M1255.7 907V916.2" stroke="#3A3A3A" stroke-width="1.1" fill="none"/>
 <rect x="1159.2" y="905" width="5.8" height="13.6" fill="#5E5E5E"/>
 <g fill="none" stroke="#333" stroke-width="1.2">
  <rect x="1329.3" y="907.8" width="7.2" height="7.2"/>
  <path d="M1329.8 905L1332.9 902.2L1336 905M1329.8 917.8L1332.9 920.6L1336 917.8M1326.2 908.2L1323.5 911.4L1326.2 914.6M1339.6 908.2L1342.3 911.4L1339.6 914.6"/>
 </g>
 <!-- accessibility -->
 <g fill="none" stroke="#222" stroke-width="1.2" stroke-linecap="round" stroke-linejoin="round">
  <circle cx="377.6" cy="906" r="2"/>
  <path d="M381 910.6Q385.6 909.2 385.2 907.2Q384.6 905.2 382.2 906.6Q379.6 908.2 377.6 908.2Q375.6 908.2 373 906.6Q370.6 905.2 370.2 907.4Q370.2 909.4 374.3 910.6L372.9 917.6Q372.8 920.6 374.6 920.4Q375.9 920 376.6 916.4L377.6 914.6L378.8 917"/>
  <path d="M379.4 912.3L387.6 920.5M387.6 912.3L379.4 920.5" stroke-width="1"/>
 </g>
</svg>
<div class="t" style="left:11px;top:904.5px;font-size:15px;color:#333;">幻灯片 第 1 张，共 26 张</div>
<div class="t" style="left:219px;top:904.5px;font-size:15px;color:#333;">简体中文(中国大陆)</div>
<div class="t" style="left:392px;top:904.5px;font-size:15px;font-weight:bold;color:#333;">辅助功能: 调查</div>
<div class="t" style="left:767px;top:904.5px;font-size:15px;color:#333;">备注</div>
<div class="t" style="left:843px;top:904.5px;font-size:15px;color:#333;">批注</div>
<div class="t" style="left:1276px;top:904px;font-size:15.5px;color:#333;">68%</div>

<div class="a" style="left:1px;top:61px;width:1px;height:864px;background:#F9F9F9;"></div>
<div class="a" style="left:1361px;top:61px;width:1px;height:864px;background:#F9F9F9;"></div>
<div class="a" style="left:1px;top:924px;width:1361px;height:1px;background:#F9F9F9;"></div>
</body>
</html>
